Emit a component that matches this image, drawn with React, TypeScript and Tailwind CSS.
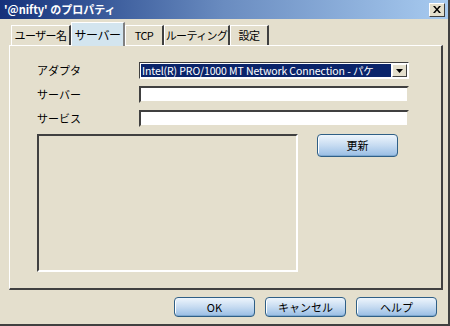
import React from 'react'

const font = { fontFamily: '"Noto Sans CJK JP", "DejaVu Sans", sans-serif' }

const tabs = [
  { label: 'ユーザー名', w: 'w-[60px]' },
  { label: 'サーバー', w: 'w-[54px]' },
  { label: 'TCP', w: 'w-[39px]' },
  { label: 'ルーティング', w: 'w-[66px]' },
  { label: '設定', w: 'w-[39px]' },
]

function XpButton({ label, className = '' }: { label: string; className?: string }) {
  return (
    <button
      className={`h-[20px] w-[81px] rounded-[4px] border border-[#2f5f86] bg-gradient-to-b from-[#eef5fc] via-[#c6dbf1] to-[#98bde4] text-[11px] leading-none text-black shadow-[inset_0_-1px_0_#7fa8cf,inset_1px_0_0_#ffffff] ${className}`}
    >
      {label}
    </button>
  )
}

export default function App() {
  return (
    <div
      style={font}
      className="w-[450px] h-[326px] bg-[#e4dfcd] border-r-2 border-b-2 border-r-[#404040] border-b-[#404040] flex flex-col overflow-hidden"
    >
      {/* タイトルバー */}
      <div className="h-[19px] flex items-center justify-between pl-[4px] pr-[3px] bg-gradient-to-r from-[#15307a] via-[#6a8cc0] to-[#a8cbf0]">
        <span className="text-white font-bold text-[11px] leading-none">'@nifty' のプロパティ</span>
        <div className="w-[16px] h-[14px] bg-[#e4dfcd] border border-t-white border-l-white border-r-[#404040] border-b-[#404040] flex items-center justify-center">
          <svg width="8" height="7" viewBox="0 0 8 7">
            <path d="M0 0h2l2 2.5L6 0h2L5 3.5 8 7H6L4 4.5 2 7H0l3-3.5z" fill="#000" />
          </svg>
        </div>
      </div>

      {/* タブ */}
      <div className="flex items-end h-[26px] pl-[11px]">
        {tabs.map((t) =>
          t.label === 'サーバー' ? (
            <div
              key={t.label}
              className={`${t.w} h-[24px] -mb-[1px] z-10 flex items-center justify-center whitespace-nowrap bg-[#d3e5ef] border-t border-l border-t-white border-l-white border-r-2 border-r-[#808080] text-[12px] tracking-[-0.5px] leading-none`}
            >
              {t.label}
            </div>
          ) : (
            <div
              key={t.label}
              className={`${t.w} h-[20px] flex items-center justify-center whitespace-nowrap border-t border-l border-t-white border-l-white border-r-2 border-r-[#404040] text-[11px] tracking-[-0.6px] leading-none`}
            >
              {t.label}
            </div>
          )
        )}
      </div>

      {/* パネル */}
      <div className="ml-[9px] w-[434px] h-[245px] border-t border-l border-t-white border-l-white border-r-2 border-b-2 border-r-[#404040] border-b-[#404040] pt-[16px] pl-[27px]">
        <div className="grid grid-cols-[102px_270px] gap-y-[7px] items-center text-[11px]">
          <span>アダプタ</span>
          <div className="h-[17px] flex items-center border border-t-[#404040] border-l-[#404040] border-r-white border-b-white bg-white pl-[1px] pr-[1px]">
            <span className="flex-1 min-w-0 overflow-hidden whitespace-nowrap bg-[#0a246a] text-white text-[10.5px] leading-[13px] px-[1px] tracking-[-0.1px]">
              Intel(R) PRO/1000 MT Network Connection - パケ
            </span>
            <div className="w-[15px] h-[13px] ml-[1px] shrink-0 bg-[#e4dfcd] border border-t-white border-l-white border-r-[#404040] border-b-[#404040] flex items-center justify-center">
              <svg width="7" height="4" viewBox="0 0 7 4">
                <path d="M0 0h7L3.5 4z" fill="#000" />
              </svg>
            </div>
          </div>
          <span>サーバー</span>
          <div className="h-[17px] bg-white border-2 border-t-[#404040] border-l-[#404040] border-r-[#e4dfcd] border-b-[#e4dfcd]" />
          <span>サービス</span>
          <div className="h-[17px] bg-white border-2 border-t-[#404040] border-l-[#404040] border-r-[#e4dfcd] border-b-[#e4dfcd]" />
        </div>

        <div className="flex mt-[7px]">
          <div className="w-[261px] h-[138px] border-2 border-t-[#404040] border-l-[#404040] border-r-white border-b-white" />
          <XpButton label="更新" className="ml-[19px] h-[23px]" />
        </div>
      </div>

      {/* ボタン */}
      <div className="flex justify-end gap-[10px] pr-[11px] mt-[7px]">
        <XpButton label="OK" />
        <XpButton label="キャンセル" />
        <XpButton label="ヘルプ" />
      </div>
    </div>
  )
}
